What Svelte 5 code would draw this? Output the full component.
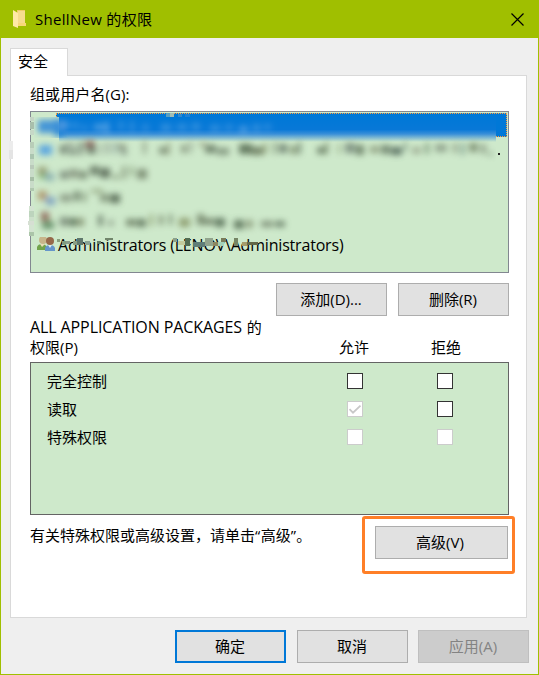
<script>
  let permissions = $state([
    { name: '完全控制', allow: false, deny: false, allowOff: false, denyOff: false },
    { name: '读取', allow: true, deny: false, allowOff: true, denyOff: false },
    { name: '特殊权限', allow: false, deny: false, allowOff: true, denyOff: true }
  ]);

  // Softened strokes standing in for the hidden names: [x, y, width, height, colour]
  const smudges = [
    [29, 38, 7, 9, '#687869'], [35, 35, 8, 7, '#9aaa98'], [38, 42, 7, 6, '#708071'], [47, 35, 5, 13, '#788878'], [54, 34, 10, 7, '#7c4f4d'], [56, 40, 9, 7, '#60705f'], [68, 36, 3, 12, '#a4b5a3'], [74, 35, 5, 12, '#a1b3a1'], [82, 35, 4, 12, '#9ab0a5'], [87, 37, 8, 6, '#84917c'], [90, 43, 6, 5, '#7f8f82'], [112, 34, 3, 13, '#84917c'],
    [128, 40, 8, 7, '#74856d'], [136, 35, 3, 13, '#94a183'], [150, 38, 6, 8, '#839279'], [158, 34, 3, 12, '#94a390'], [168, 35, 8, 5, '#a5b093'], [174, 38, 11, 8, '#62745f'], [186, 41, 12, 7, '#788b75'], [208, 37, 13, 10, '#52684f'], [220, 40, 12, 8, '#657459'], [232, 36, 4, 11, '#94a47e'], [242, 35, 3, 12, '#7e8f73'], [248, 37, 8, 9, '#657767'], [259, 39, 7, 8, '#7f906f'], [267, 35, 3, 12, '#627865'], [286, 40, 8, 7, '#657960'], [294, 35, 3, 12, '#778c6c'], [307, 37, 2, 10, '#84956c'], [314, 36, 10, 10, '#758778'], [325, 38, 8, 10, '#63775f'], [339, 39, 9, 7, '#899778'], [350, 38, 9, 9, '#677b66'], [360, 40, 11, 8, '#4e6456'], [373, 35, 3, 9, '#78917e'], [381, 40, 9, 7, '#9ba990'], [394, 36, 4, 11, '#789276'], [404, 37, 12, 8, '#899b85'], [422, 36, 4, 10, '#87957f'], [430, 36, 3, 12, '#6a8b7d'], [438, 36, 9, 9, '#78896d'], [450, 37, 5, 10, '#899982'], [458, 45, 3, 4, '#71866f'],
    [29, 64, 8, 8, '#738374'], [38, 62, 9, 9, '#83917b'], [48, 64, 8, 8, '#6f806b'], [59, 59, 9, 9, '#5e705c'], [69, 61, 10, 10, '#526451'], [82, 68, 6, 4, '#7d8e70'], [91, 59, 4, 13, '#849478'], [99, 59, 3, 10, '#839976'], [106, 62, 10, 10, '#74856c'],
    [29, 87, 12, 8, '#879782'], [43, 84, 6, 10, '#677a64'], [52, 85, 3, 10, '#6f8065'], [60, 82, 12, 4, '#92a47f'], [69, 87, 9, 8, '#7d8f74'], [79, 87, 10, 9, '#4d614b'],
    [29, 110, 8, 9, '#738372'], [38, 111, 8, 8, '#51674d'], [47, 111, 6, 8, '#7b8a68'], [67, 108, 5, 11, '#697c67'], [77, 113, 6, 6, '#90a18d'], [95, 112, 10, 7, '#697c60'], [106, 112, 9, 8, '#5a6e56'], [119, 107, 3, 12, '#87986b'], [128, 108, 4, 10, '#758566'], [138, 107, 3, 11, '#65785c'], [148, 111, 11, 9, '#889668'], [166, 107, 7, 11, '#718166'], [173, 111, 10, 7, '#6f8167'], [184, 111, 10, 9, '#516951'], [203, 113, 10, 9, '#526a51'], [215, 113, 7, 8, '#879777'], [230, 114, 12, 6, '#74856d'], [244, 114, 10, 6, '#60765f'],
    [7, 60, 9, 8, '#8e9367'], [8, 67, 8, 5, '#7cae6f'], [15, 66, 8, 8, '#83a9ae'], [7, 84, 9, 9, '#aa8c61'], [15, 90, 9, 8, '#7196bf'], [10, 105, 8, 9, '#895b50'], [11, 114, 12, 8, '#58865e'],
    [8, 38, 13, 10, '#4c9de2']
  ];

  const glows = [
    [29, 10, 10, 6, 0.32], [42, 10, 5, 7, 0.26], [50, 13, 7, 5, 0.2], [63, 12, 9, 6, 0.4], [73, 10, 5, 11, 0.42], [87, 9, 6, 9, 0.2], [99, 9, 4, 11, 0.25], [111, 12, 7, 7, 0.2], [130, 12, 10, 7, 0.25], [146, 12, 10, 6, 0.25], [161, 11, 8, 7, 0.25], [179, 13, 10, 6, 0.25], [194, 12, 8, 7, 0.2], [208, 14, 9, 7, 0.34], [222, 12, 7, 8, 0.25], [233, 12, 7, 6, 0.22]
  ];

  // Square mosaic fragments along the hidden area's edge
  const chips = [
    [-1, 5, 4, 4, '#c5d5c5'], [-1, 10, 4, 7, '#a9bfac'], [-1, 18, 4, 5, '#c6d8c7'], [-1, 30, 4, 6, '#b8cdb8'], [-1, 36, 4, 6, '#c9dcc9'], [-1, 42, 4, 5, '#abc5b0'], [-1, 47, 4, 6, '#c9dcc9'], [-1, 53, 4, 4, '#bacaba'], [-1, 57, 4, 8, '#c9dcc9'], [-1, 65, 4, 4, '#a8bfa8'], [-1, 69, 4, 7, '#c9dcc9'], [-1, 76, 4, 3, '#b1c8b0'], [-2, 94, 5, 5, '#d3e4d1'], [-2, 99, 5, 6, '#bdd4bd'], [-2, 105, 5, 4, '#cde0cb'], [-3, 109, 6, 4, '#d6dfd3'], [-2, 113, 5, 7, '#d3e4d1'], [-2, 120, 5, 4, '#abc5a9'],
    [-22, 29, 4, 9, '#ececec'], [-22, 38, 4, 9, '#e4e4e4'],
    [135, 1, 4, 4, '#5a9fc0'], [139, 1, 4, 4, '#a3bdb4'], [147, 2, 4, 3, '#3088cf'], [154, 2, 5, 3, '#2081d3'],
    [26, 127, 3, 3, '#8a9f7e'], [31, 129, 4, 4, '#809c80'], [35, 129, 4, 3, '#8a9c8b'], [42, 129, 4, 4, '#8a9f85'], [46, 126, 6, 7, '#60786c'], [54, 129, 5, 4, '#8aa493'], [66, 129, 4, 3, '#667e68'], [74, 126, 8, 2, '#71856b'],
    [142, 126, 4, 4, '#8ca18b'], [147, 129, 7, 4, '#c4cc9c'], [154, 126, 5, 8, '#526d52'], [162, 130, 12, 5, '#5f7d77'], [174, 126, 8, 8, '#92a48d'], [182, 130, 5, 4, '#8c8762'], [187, 130, 6, 4, '#a3d1ba'], [190, 126, 5, 4, '#787a58'], [203, 126, 4, 8, '#758464'], [211, 130, 5, 4, '#a59c6b'], [216, 130, 11, 3, '#626747']
  ];
</script>

{#snippet box(checked, off)}
  <span class="check" class:off>
    {#if checked}
      <svg width="14" height="14" viewBox="0 0 14 14"><path d="M1.5 7.2 5 10.7 12.5 3.7" fill="none" stroke="#c8c8c8" stroke-width="1.8" /></svg>
    {/if}
  </span>
{/snippet}

<div class="window">
  <header>
    <svg class="folder" width="14" height="18" viewBox="0 0 14 18">
      <path d="M4 0H12V13H13V16H4Z" fill="#efcb68" />
      <path d="M5 1H12V13H5Z" fill="#f6dc8d" />
      <path d="M0 0 5 3V18L0 16Z" fill="#ffe9a6" />
      <path d="M5 13H13V16H5Z" fill="#f7d878" />
    </svg>
    <h1>ShellNew 的权限</h1>
    <svg class="close" width="13" height="13" viewBox="0 0 13 13"><path d="M.5.5 12.5 12.5M12.5.5.5 12.5" stroke="#000" stroke-width="1.2" /></svg>
  </header>

  <main>
    <div class="tab">安全</div>
    <section class="panel">
      <div class="label">组或用户名(G):</div>
      <div class="groups">
        <div class="selected"></div>
        <svg class="redacted" width="477" height="160" viewBox="0 0 477 160">
          <defs>
            <filter id="soft" x="-10%" y="-10%" width="120%" height="120%"><feGaussianBlur stdDeviation="3" /></filter>
            <linearGradient id="fade" x2="0" y2="1">
              <stop offset="0" stop-color="#0078d7" /><stop offset=".5" stop-color="#0878d7" /><stop offset=".68" stop-color="#398fd8" /><stop offset="1" stop-color="#cee9cb" />
            </linearGradient>
            <clipPath id="zone"><rect x="3" y="5" width="462" height="120" /></clipPath>
          </defs>
          <g clip-path="url(#zone)">
            <rect x="3" y="5" width="462" height="120" fill="#cee9cb" />
            <rect x="28" y="5" width="437" height="25" fill="url(#fade)" />
            <g filter="url(#soft)">
              <rect x="23" y="7" width="10" height="17" fill="#2385d8" />
              <rect x="7" y="8" width="19" height="13" fill="#4595d7" />
              {#each glows as [x, y, w, h, o]}
                <rect {x} {y} width={w} height={h} fill="#b6d7f5" opacity={o} />
              {/each}
            </g>
            <g filter="url(#soft)" transform="translate(0 -5)" opacity=".85">
              {#each smudges as [x, y, w, h, c]}
                <rect {x} {y} width={w} height={h} fill={c} />
              {/each}
            </g>
          </g>
          <rect x="467" y="41" width="2" height="2" fill="#222" />
        </svg>
        <div class="group">
          <svg width="19" height="16" viewBox="0 0 19 16">
            <circle cx="6" cy="4" r="4" fill="#c7b58a" />
            <path d="M0 14V11Q1 8 5 8T10 12V14Z" fill="#72a44c" />
            <path d="M3 8 5 11 8 8" fill="#e9ddb6" />
            <circle cx="13" cy="5" r="4" fill="#96684a" />
            <path d="M8 15V12Q9 9 13 9T18 12V15Z" fill="#6696ca" />
            <path d="M11 9 13 12 15 9" fill="#dcebf1" />
          </svg>
          <span>Administrators (LENOV\Administrators)</span>
        </div>
        <svg class="mosaic" width="477" height="160" viewBox="0 0 477 160">
          {#each chips as [x, y, w, h, c]}
            <rect {x} {y} width={w} height={h} fill={c} />
          {/each}
        </svg>
      </div>
      <div class="edit">
        <button>添加(D)...</button>
        <button>删除(R)</button>
      </div>
      <div class="heading">
        <div class="subject"><span class="caps">ALL APPLICATION PACKAGES</span>{' '}<span class="de">的</span><br />权限(P)</div>
        <span class="col">允许</span>
        <span class="col">拒绝</span>
      </div>
      <div class="permissions">
        {#each permissions as p}
          <div class="row">
            <span class="name">{p.name}</span>
            {@render box(p.allow, p.allowOff)}
            {@render box(p.deny, p.denyOff)}
          </div>
        {/each}
      </div>
      <div class="advanced">
        <p>有关特殊权限或高级设置，请单击<span class="q">“</span>高级<span class="q">”</span>。</p>
        <div class="highlight"><button>高级(V)</button></div>
      </div>
    </section>
  </main>

  <footer>
    <button class="primary">确定</button>
    <button>取消</button>
    <button class="last" disabled>应用(A)</button>
  </footer>
</div>

<style>
  :global(body) { margin: 0; }
  .window, .window * { box-sizing: border-box; }
  .window {
    width: 539px; height: 675px; border: 1px solid #a0bf00; background: #efefef;
    display: flex; flex-direction: column; overflow: hidden;
    font: 15px/20px "Open Sans", "Noto Sans CJK SC", sans-serif; color: #000;
  }
  header { height: 37px; flex: none; background: #a0bf00; display: flex; align-items: center; padding: 0 14px 0 12px; }
  .folder { margin-bottom: 1px; }
  h1 { margin: 0 auto 2px 8px; font-size: 15px; font-weight: 400; line-height: 20px; letter-spacing: .3px; }
  main { padding: 10px 11px 0 9px; display: flex; flex-direction: column; }
  .tab { width: 58px; height: 28px; margin-bottom: -1px; padding: 2px 0 0 7px; background: #fff; border: 1px solid #d9d9d9; border-bottom: 0; z-index: 1; }
  .panel { width: 517px; height: 543px; background: #fff; border: 1px solid #d9d9d9; padding: 8px 17px 0 19px; display: flex; flex-direction: column; }
  .label { height: 27px; flex: none; letter-spacing: .1px; }
  .groups { position: relative; width: 479px; height: 162px; flex: none; background: #cee9cb; border: 1px solid #828790; padding-top: 1px; }
  .selected { margin: 0 1px 0 25px; height: 24px; background: #0078d7; border: 1px dotted #ff9b3c; }
  .redacted, .mosaic { position: absolute; left: 0; top: 0; overflow: visible; }
  .group { display: flex; align-items: center; height: 20px; margin: 98px 0 0 6px; white-space: nowrap; }
  .group span { margin-left: 2px; font-size: 16px; letter-spacing: -.19px; }
  .group svg { flex: none; margin-bottom: 2px; }
  button {
    width: 111px; height: 33px; padding: 0 1px 2px 0; flex: none; background: #e1e1e1; border: 1px solid #adadad; border-radius: 0;
    font: inherit; color: #000;
  }
  .edit { display: flex; gap: 11px; justify-content: flex-end; margin: 10px 0 0; width: 479px; }
  .heading { display: flex; align-items: flex-end; height: 41px; margin-bottom: 5px; flex: none; }
  .subject { width: 278px; white-space: nowrap; }
  .caps { font-size: 16px; letter-spacing: -.1px; line-height: 18px; }
  .de { margin-left: 1px; }
  .col { width: 92px; text-align: center; }
  .permissions { width: 479px; height: 153px; flex: none; background: #cee9cb; border: 1px solid #646464; padding: 4px 0 0 16px; }
  .row { display: flex; align-items: center; height: 28px; }
  .name { width: 300px; flex: none; }
  .check { width: 16px; height: 16px; flex: none; margin-right: 74px; border: 1px solid #333; background: #fff; display: flex; }
  .check.off { border-color: #ccc; }
  .advanced { display: flex; width: 487px; flex: none; }
  p { margin: 10px 0 0; width: 332px; flex: none; white-space: nowrap; }
  .q { letter-spacing: .4px; }
  .highlight { width: 153px; height: 58px; flex: none; margin-top: 1px; border: 3px solid #ff7f27; border-radius: 3px; padding: 7px 0 0 10px; }
  .highlight button { width: 133px; padding-right: 3px; }
  footer { display: flex; gap: 11px; padding: 12px 0 0 174px; }
  .primary { border: 2px solid #0078d7; }
  .last { margin-left: -1px; }
  button:disabled { background: #ccc; border-color: #bfbfbf; color: #838383; }
</style>
